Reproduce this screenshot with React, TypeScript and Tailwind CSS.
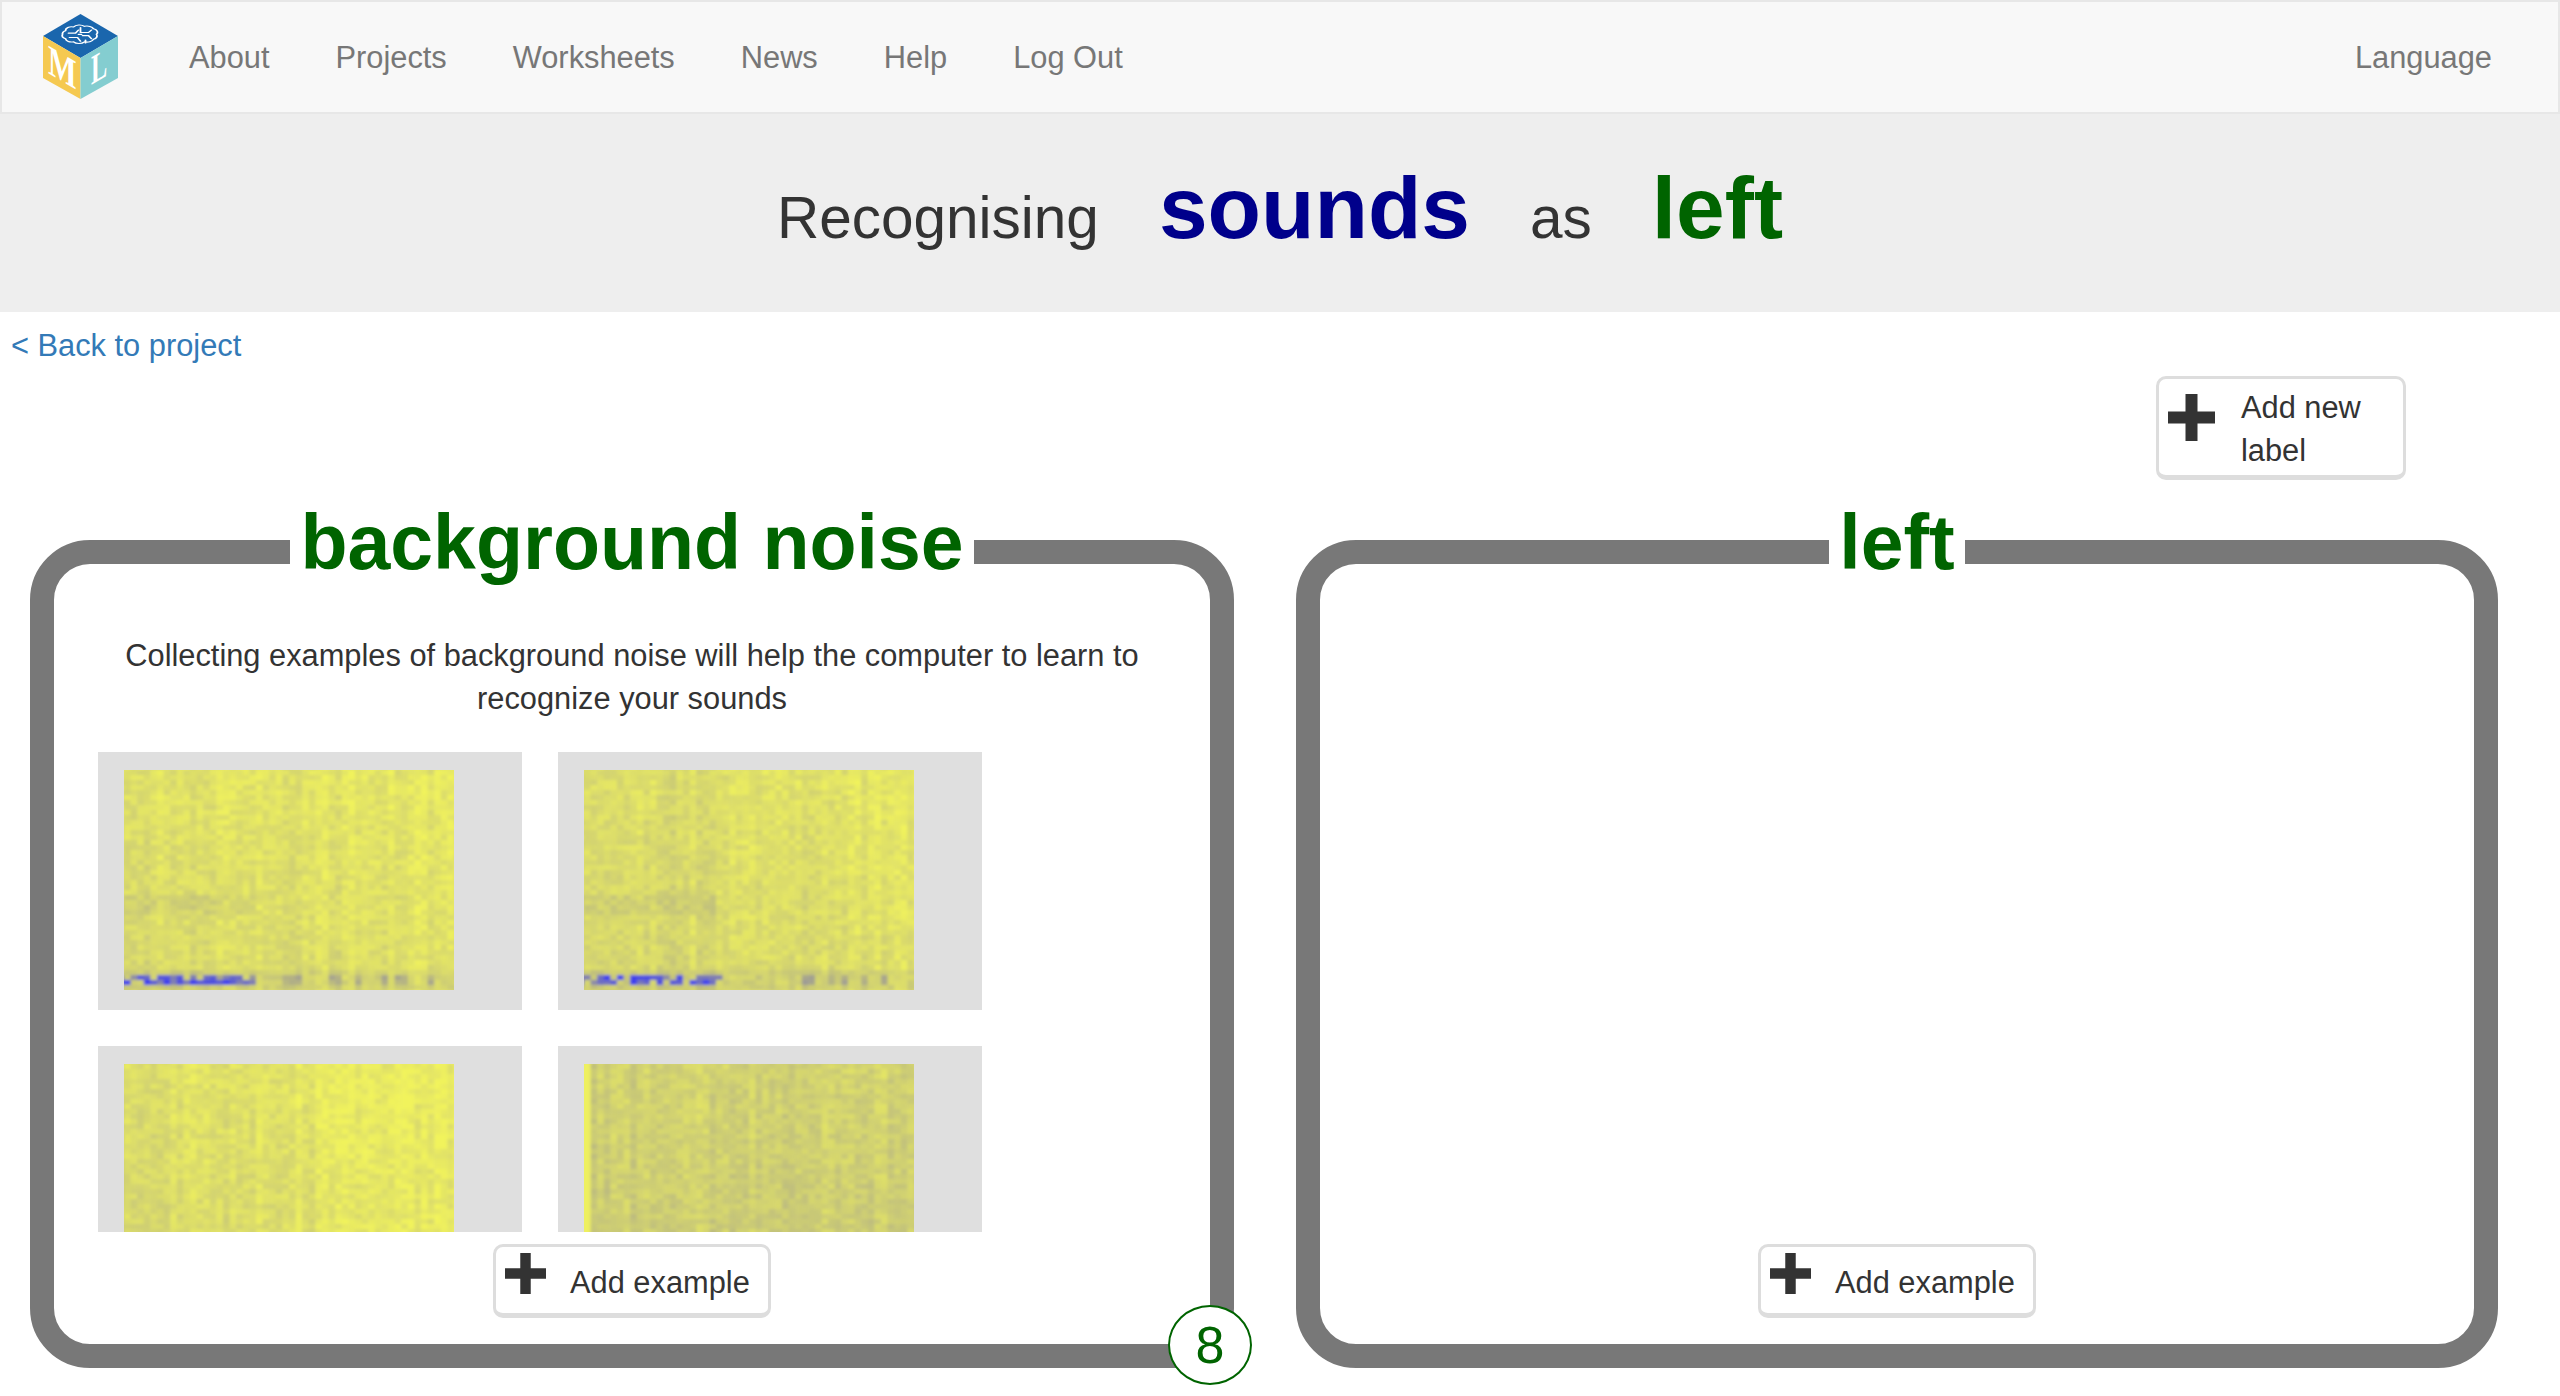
import React from 'react';

type SpecOptions = {
    seed: number;
    base: number;
    drift: number;
    blueEnd: number;
    band: boolean;
    strip?: boolean;
};

const CELL_W = 6.6;
const CELL_H = 5;
const COLS = 50;
const ROWS = 44;

const makeRandom = (seed: number) => {
    let s = seed;
    return () => {
        s = (s + 0x6d2b79f5) | 0;
        let t = Math.imul(s ^ (s >>> 15), 1 | s);
        t = (t + Math.imul(t ^ (t >>> 7), 61 | t)) ^ t;
        return ((t ^ (t >>> 14)) >>> 0) / 4294967296;
    };
};

const mix = (a: number[], b: number[], t: number) =>
    a.map((v, i) => Math.round(v + (b[i] - v) * t));

const toColor = (v: number) => {
    const yellow = [241, 243, 92];
    const grey = [170, 168, 138];
    const blue = [60, 62, 240];
    const c = v < 0.5 ? mix(yellow, grey, Math.max(v, 0) * 2) : mix(grey, blue, Math.min(v - 0.5, 0.5) * 2);
    return `rgb(${c[0]},${c[1]},${c[2]})`;
};

const buildCells = ({ seed, base, drift, blueEnd, band, strip }: SpecOptions) => {
    const rand = makeRandom(seed);
    const streaks = Array.from({ length: COLS + 2 }, () => (rand() - 0.5) * 0.1);
    const cells: { x: number; y: number; fill: string }[] = [];
    for (let r = -1; r <= ROWS; r++) {
        for (let c = -1; c <= COLS; c++) {
            let v = base + (drift * c) / COLS + streaks[c + 1] + (rand() - 0.5) * 0.15;
            v += (r / ROWS) * 0.05;
            if (band && r >= 25 && r <= 28 && c < 20) v += 0.06;
            if (band && r >= 40 && r <= 43) {
                v += 0.08;
                if (r >= 41 && r <= 42) {
                    // blue runs break up along the low frequency rows
                    if (c < blueEnd && rand() > 0.25) v += 0.3 + rand() * 0.45;
                    else if (c >= blueEnd && streaks[c + 1] > 0.015) v += 0.2;
                }
            }
            if (strip && c < 1) v = 0.02;
            cells.push({ x: c * CELL_W, y: r * CELL_H, fill: toColor(v) });
        }
    }
    return cells;
};

const tiles: SpecOptions[] = [
    { seed: 11, base: 0.13, drift: -0.05, blueEnd: 20, band: true },
    { seed: 29, base: 0.17, drift: -0.08, blueEnd: 21, band: true },
    { seed: 47, base: 0.16, drift: -0.13, blueEnd: 0, band: false },
    { seed: 73, base: 0.23, drift: -0.03, blueEnd: 0, band: false, strip: true },
];

const Spectrogram = ({ options }: { options: SpecOptions }) => {
    const id = `blur-${options.seed}`;
    return (
        <svg width="330" height="220" viewBox="0 0 330 220" className="block">
            <defs>
                <filter id={id} x="-5%" y="-5%" width="110%" height="110%">
                    <feGaussianBlur stdDeviation="1.6" />
                </filter>
            </defs>
            <g filter={`url(#${id})`}>
                {buildCells(options).map((cell, i) => (
                    <rect key={i} x={cell.x} y={cell.y} width={CELL_W + 0.5} height={CELL_H + 0.5} fill={cell.fill} />
                ))}
            </g>
        </svg>
    );
};

const Logo = () => (
    <svg width="76" height="86" viewBox="0 0 76 86" className="shrink-0">
        <polygon points="37.5,0 75,22 37.5,44 0,22" fill="#1a66ad" />
        <polygon points="0,22 37.5,44 37.5,85 0,64" fill="#f5c951" />
        <polygon points="75,22 37.5,44 37.5,85 75,64" fill="#84cdd0" />
        <text
            transform="matrix(0.72 0.42 0 1 5 59)"
            fontFamily="'Liberation Serif', serif"
            fontWeight="700"
            fontSize="42"
            fill="#fff"
        >
            M
        </text>
        <text
            transform="matrix(0.58 -0.34 0 1 48 71)"
            fontFamily="'Liberation Serif', serif"
            fontWeight="700"
            fontSize="42"
            fill="#fff"
        >
            L
        </text>
        <g transform="translate(37.5 21) scale(1 0.62)" fill="none" stroke="#fff" strokeWidth="1.8" strokeLinecap="round">
            <path d="M-15 -7 a6 6 0 0 1 8 -6 a7 7 0 0 1 11 -1 a7 7 0 0 1 9 4 a6 6 0 0 1 3 9 a6 6 0 0 1 -3 8 a7 7 0 0 1 -9 4 a7 7 0 0 1 -11 0 a6 6 0 0 1 -8 -5 a6 6 0 0 1 -3 -7 a6 6 0 0 1 3 -6 z" />
            <path d="M-12 -3 h7 l3 -5 M-11 4 h8 l3 6 M0 -12 v8 h8 l3 -4 M2 1 h6 l3 5 M-2 -1 h3 M5 8 v5" />
        </g>
    </svg>
);

const Plus = ({ size }: { size: number }) => (
    <svg width={size} height={size} viewBox="0 0 47 47" className="shrink-0" fill="#333">
        <path d="M17.5 0h12v17.5h17.5v12h-17.5v17.5h-12v-17.5H0v-12h17.5z" />
    </svg>
);

const AddExample = () => (
    <button className="mx-auto flex h-[74px] w-[278px] items-start rounded-[10px] border-[3px] border-b-[5px] border-[#ddd] bg-white pl-[9px] pt-[6px] text-[#333]">
        <Plus size={41} />
        <span className="ml-[24px] mt-[9px] whitespace-nowrap">Add example</span>
    </button>
);

const navItems = ['About', 'Projects', 'Worksheets', 'News', 'Help', 'Log Out'];

export default function App() {
    return (
        <div className="h-[1396px] w-full overflow-hidden bg-white font-['Liberation_Sans',sans-serif] text-[30.8px] leading-[42.5px] text-[#333]">
            <nav className="flex h-[114px] items-center border-2 border-[#e7e7e7] bg-[#f8f8f8] pl-[41px] pr-[33px] text-[#777]">
                <Logo />
                <ul className="ml-[37px] flex pt-[2px]">
                    {navItems.map((item) => (
                        <li key={item} className="px-[33px]">
                            {item}
                        </li>
                    ))}
                </ul>
                <span className="ml-auto px-[33px] pt-[2px]">Language</span>
            </nav>

            <header className="flex h-[198px] items-baseline justify-center gap-[60px] bg-[#eee] pt-[39px] text-[58.5px] leading-[110px]">
                <span>Recognising</span>
                <span className="text-[87.5px] font-bold text-[#00008b]">sounds</span>
                <span>as</span>
                <span className="text-[87.5px] font-bold text-[#006400]">left</span>
            </header>

            <div className="px-[11px] pt-[12px] leading-[43px] text-[#337ab7]">&lt; Back to project</div>

            <div className="mt-[9px] flex justify-end pr-[154px]">
                <button className="flex h-[104px] w-[250px] items-start rounded-[10px] border-[3px] border-b-[5px] border-[#ddd] bg-white pl-[9px] pt-[15px] text-left text-[#333]">
                    <Plus size={47} />
                    <span className="-mt-[7px] ml-[26px] w-[160px]">Add new label</span>
                </button>
            </div>

            <div className="mt-[19px] grid grid-cols-[1204px_1202px] gap-[62px] pl-[30px]">
                <fieldset className="relative h-[869px] rounded-[60px] border-[24px] border-[#787878]">
                    <legend className="mx-auto px-[10px] pb-[20px] text-[77px] font-bold leading-[86px] text-[#006400]">
                        background noise
                    </legend>
                    <p className="mt-[30px] px-[40px] text-center">
                        Collecting examples of background noise will help the computer to learn to recognize your sounds
                    </p>
                    <div className="mt-[32px] flex h-[480px] flex-wrap content-start gap-[36px] overflow-hidden pl-[44px]">
                        {tiles.map((tile) => (
                            <div key={tile.seed} className="h-[258px] w-[424px] bg-[#dfdfdf] pl-[26px] pt-[18px]">
                                <Spectrogram options={tile} />
                            </div>
                        ))}
                    </div>
                    <div className="mt-[12px]">
                        <AddExample />
                    </div>
                    <div className="absolute -bottom-[41px] -right-[42px] flex h-[80px] w-[84px] items-center justify-center rounded-[50%] border-2 border-[#006400] bg-white text-[52px] leading-none text-[#006400]">
                        8
                    </div>
                </fieldset>

                <fieldset className="h-[869px] rounded-[60px] border-[24px] border-[#787878]">
                    <legend className="mx-auto px-[10px] pb-[20px] text-[77px] font-bold leading-[86px] text-[#006400]">
                        left
                    </legend>
                    <div className="mt-[639px]">
                        <AddExample />
                    </div>
                </fieldset>
            </div>
        </div>
    );
}
